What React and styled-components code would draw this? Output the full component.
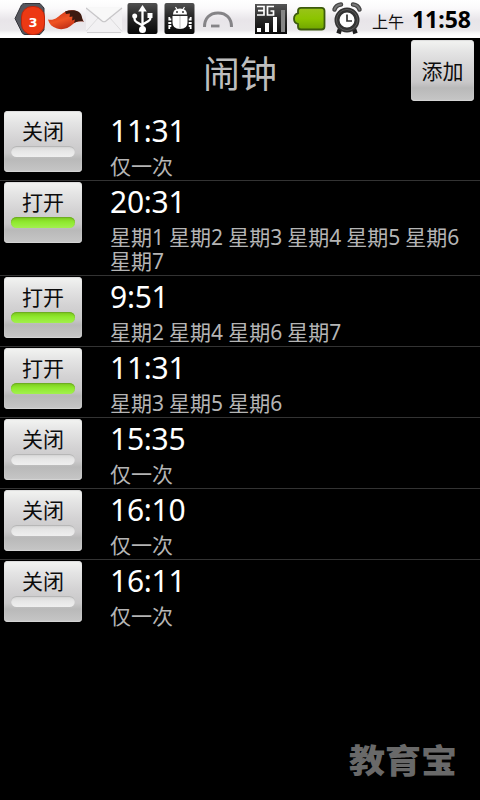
import React from "react";
import styled, { createGlobalStyle } from "styled-components";

const GlobalStyle = createGlobalStyle`
  * { box-sizing: border-box; }
  html, body { margin: 0; background: #000; }
  body { font-family: "Noto Sans", "Noto Sans CJK SC", sans-serif; }
`;

const Screen = styled.div`
  position: relative;
  width: 480px;
  height: 800px;
  overflow: hidden;
  background: #000;
`;

const StatusBar = styled.div`
  height: 38px;
  display: flex;
  padding: 0 9px 0 14px;
  background: linear-gradient(#fff 0, #fbfafb 8px, #e8e5e9 20px, #eae8eb 30px, #f8f8f8 33px, #fff 36px);
`;

const IconGroup = styled.div`
  display: flex;
  height: 38px;
  svg { display: block; flex: none; }
`;

const SystemIcons = styled(IconGroup)`
  margin-left: 18px;
`;

const Clock = styled.div`
  display: flex;
  flex: none;
  align-items: baseline;
  gap: 8px;
  margin-left: auto;
  color: #111;
  line-height: 38px;
`;

const Meridiem = styled.span`
  font-size: 16px;
`;

const ClockTime = styled.span`
  font-size: 23px;
  font-weight: 700;
  color: #000;
`;

const Header = styled.header`
  height: 72px;
  display: grid;
  grid-template-columns: 69px 1fr 69px;
  padding-top: 2px;
`;

const Title = styled.h1`
  grid-column: 2;
  margin: 0;
  text-align: center;
  font-size: 37px;
  font-weight: 400;
  line-height: 67px;
  color: #bebebe;
`;

const ButtonFace = styled.button`
  display: flex;
  flex-direction: column;
  align-items: center;
  height: 61px;
  padding: 0;
  border: 0;
  border-radius: 4px;
  background: linear-gradient(#f3f4f2 0, #e4e4e4 12px, #d4d3d4 28px, #c9c8c9 42px, #b9b9b9 48px, #c6c6c6 61px);
  box-shadow: inset 0 -1px 1px #d4d4d4, inset 0 1px 1px #dcdcdc;
  font-family: inherit;
  font-size: 21px;
  color: #0c0c0c;
`;

const AddButton = styled(ButtonFace)`
  width: 63px;
  line-height: 63px;
`;

const ToggleButton = styled(ButtonFace)`
  flex: none;
  width: 78px;
  line-height: 24px;
  padding-top: 8px;
`;

const Indicator = styled.span`
  width: 64px;
  height: 11px;
  margin-top: 3px;
  border-radius: 6px;
  background: ${(p) => (p.$on ? "linear-gradient(#7cc71d, #8fe92e 45%, #a2f04e)" : "linear-gradient(#d6d6d6, #e6e6e6 45%, #efefef)")};
  box-shadow: inset 0 1px 1px ${(p) => (p.$on ? "#6cab22" : "#b4b4b4")};
`;

const AlarmList = styled.ul`
  margin: 0;
  padding: 0;
  list-style: none;
`;

const AlarmRow = styled.li`
  display: flex;
  gap: 28px;
  min-height: 71px;
  padding: 1px 0 0 4px;
  border-bottom: 1px solid #333;
  &:last-child { border-bottom-color: transparent; }
`;

const AlarmInfo = styled.div`
  flex: 1;
  padding-bottom: 2px;
`;

const AlarmTime = styled.div`
  height: 43px;
  font-size: 30px;
  line-height: 40px;
  letter-spacing: -0.25px;
  color: #fff;
`;

const AlarmDays = styled.div`
  width: 356px;
  font-size: 21px;
  line-height: 24px;
  word-spacing: -0.4px;
  color: #b5b5b5;
`;

const Watermark = styled.div`
  position: absolute;
  left: 349px;
  top: 741px;
  font-size: 36px;
  font-weight: 900;
  line-height: 40px;
  transform: scaleY(0.93);
  color: #696969;
`;

const Badge = () => (
  <svg width="32" height="38" viewBox="14 0 32 38">
    <path d="M15 18.500 21.500 5q1-1.500 3-1.500H40l4 4.500v22l-4 4.500H25q-2 0-3-2z" fill="#55565d" stroke="#34343a" />
    <rect x="21.500" y="6.500" width="23" height="28" rx="10.500" fill="#ed3914" stroke="#bf250c" />
    <text x="33" y="27" textAnchor="middle" fontFamily="DejaVu Sans" fontWeight="700" fontSize="13" fill="#fff">3</text>
  </svg>
);

const Tail = () => (
  <svg width="40" height="38" viewBox="46 0 40 38">
    <defs>
      <linearGradient id="fur" x1="0" x2=".6" y1="0" y2="1">
        <stop offset="0" stopColor="#c02a12" /><stop offset=".55" stopColor="#f05424" /><stop offset="1" stopColor="#b92a14" />
      </linearGradient>
    </defs>
    <path d="M48 19.500C54 21 58 17 61 14.500C66 10 72 9 77 11.500C82 14 81 19 84 21.500C79 21 76 21.500 73 24C68 29 62 30 57 28.500C52 27 49 24 48 19.500Z" fill="url(#fur)" />
    <path d="M65 11.500C72 9 80 10 81.500 15.500C82.500 19 82.500 20.500 84 21.500C79.500 21 77 21.300 74 23L75 19.500L72 20.500L72.500 16.500L69.500 17L70 13.500L66 14Z" fill="#3c1a10" />
  </svg>
);

const Mail = () => (
  <svg width="40" height="38" viewBox="86 0 40 38">
    <path d="M86 7.500h36v24q0 1-1 1H87q-1 0-1-1z" fill="#f2f1f3" />
    <path d="M87 7.500h34l-17 14z" fill="#f8f8f8" />
    <path d="m86 31.500 12.500-14M122 31.500l-12.500-14" fill="none" stroke="#dcdbdd" />
    <path d="m86 8 16 13q2 1.500 4 0L122 8" fill="none" stroke="#c7c6c8" strokeWidth="1.200" />
    <path d="M87 32.500h34" stroke="#cfced0" />
  </svg>
);

const DarkTile = ({ x }) => (
  <>
    <defs>
      <linearGradient id={"tile" + x} x2="0" y2="1">
        <stop stopColor="#515151" /><stop offset=".4" stopColor="#292929" /><stop offset="1" stopColor="#070707" />
      </linearGradient>
    </defs>
    <rect x={x} y="3" width="30" height="31" rx="2" fill={`url(#tile${x})`} />
  </>
);

const Usb = () => (
  <svg width="37" height="38" viewBox="126 0 37 38">
    <DarkTile x={127.5} />
    <path d="M142.500 29V9M142.500 25.500l-6-3.500q-2-1-2-3.500V17M142.500 24.500l6-3.500q2-1 2-3.500V16" fill="none" stroke="#fff" strokeWidth="2.300" />
    <path d="m142.500 5 4.300 6.500h-8.600z" fill="#fff" />
    <circle cx="142.500" cy="29.500" r="3.500" fill="#fff" />
    <circle cx="134.700" cy="16" r="2.500" fill="#fff" />
    <path d="M147.500 13h5v5h-5z" fill="#fff" />
  </svg>
);

const Debug = () => (
  <svg width="38" height="38" viewBox="163 0 38 38">
    <DarkTile x={164.5} />
    <path d="M173 14.500q0-6 7-6t7 6zM172.500 16h15v6.500q0 6.500-7.500 6.500t-7.500-6.500z" fill="#fff" />
    <path d="m175.500 7 1.500 2.500m7.500-2.500-1.500 2.500" stroke="#fff" strokeWidth="1.200" />
    <path d="M171.300 19.500h-2v-2.500m2 6h-3m3 3h-2v3M188.700 19.500h2v-2.500m-2 6h3m-3 3h2v3" fill="none" stroke="#fff" strokeWidth="1.800" />
    <circle cx="177" cy="12" r=".9" fill="#222" /><circle cx="183" cy="12" r=".9" fill="#222" />
    <path d="M180 16v13" stroke="#aaa" strokeWidth=".8" />
  </svg>
);

const Gauge = () => (
  <svg width="35" height="38" viewBox="201 0 35 38">
    <path d="M204.500 27c0-8.500 5-14 13.500-14S231.500 18.500 231.500 27" fill="none" stroke="#858487" strokeWidth="3" />
    <path d="M211 26h8.500" stroke="#858487" strokeWidth="2.800" />
  </svg>
);

const Signal = () => (
  <svg width="35" height="38" viewBox="254 0 35 38">
    <defs>
      <linearGradient id="signal" x2="0" y2="1"><stop stopColor="#555" /><stop offset=".5" stopColor="#292929" /><stop offset="1" stopColor="#090909" /></linearGradient>
    </defs>
    <path d="M255 4h32v30h-32z" fill="url(#signal)" />
    <path d="M257 6.500h7v8.500h-7m1-4.300h6M274 6.500h-6.500v8.500h6V11h-3" fill="none" stroke="#fff" strokeWidth="1.700" />
    <path d="M257 28h4v4h-4zM265 23h4v9h-4zM273 17h4v15h-4z" fill="#fff" />
    <path d="M281 10h4v22h-4z" fill="#858585" />
  </svg>
);

const Battery = () => (
  <svg width="40" height="38" viewBox="289 0 40 38">
    <defs>
      <linearGradient id="battery" x2="0" y2="1"><stop stopColor="#9ac31b" /><stop offset=".5" stopColor="#8cc400" /><stop offset="1" stopColor="#70a500" /></linearGradient>
    </defs>
    <path d="M301 7.800h20.500q3 0 3 3V26.500q0 3-3 3H301q-3 0-3-3V24q-4-1-4-5.300t4-5.300v-2.600q0-3 3-3z" fill="url(#battery)" stroke="#3c5a0c" strokeWidth="1.800" />
  </svg>
);

const AlarmClock = () => (
  <svg width="34" height="38" viewBox="329 0 34 38">
    <path d="m340 29-1.500 4.500M354 29l1.500 4.500" stroke="#202020" strokeWidth="4.500" />
    <circle cx="347" cy="20" r="10" fill="#fff" stroke="#333" strokeWidth="5" />
    <circle cx="347" cy="20" r="10.500" fill="none" stroke="#5a5a5a" strokeWidth="1" />
    <path d="M334.500 9.500Q336 5 341 4.500M359.500 9.500Q358 5 353 4.500" fill="none" stroke="#444" strokeWidth="4.500" strokeLinecap="round" />
    <path d="M334.500 9.500Q336 5 341 4.500M359.500 9.500Q358 5 353 4.500" fill="none" stroke="#777" strokeWidth="2" strokeLinecap="round" />
    <path d="M347 14.500V21h5" fill="none" stroke="#333" strokeWidth="1.700" />
  </svg>
);

const alarms = [
  { time: "11:31", days: "仅一次", on: false },
  { time: "20:31", days: "星期1 星期2 星期3 星期4 星期5 星期6 星期7", on: true },
  { time: "9:51", days: "星期2 星期4 星期6 星期7", on: true },
  { time: "11:31", days: "星期3 星期5 星期6", on: true },
  { time: "15:35", days: "仅一次", on: false },
  { time: "16:10", days: "仅一次", on: false },
  { time: "16:11", days: "仅一次", on: false },
];

export default function App() {
  return (
    <Screen>
      <GlobalStyle />
      <StatusBar>
        <IconGroup><Badge /><Tail /><Mail /><Usb /><Debug /><Gauge /></IconGroup>
        <SystemIcons><Signal /><Battery /><AlarmClock /></SystemIcons>
        <Clock><Meridiem>上午</Meridiem><ClockTime>11:58</ClockTime></Clock>
      </StatusBar>
      <Header>
        <Title>闹钟</Title>
        <AddButton>添加</AddButton>
      </Header>
      <AlarmList>
        {alarms.map((a, i) => (
          <AlarmRow key={i}>
            <ToggleButton>
              {a.on ? "打开" : "关闭"}
              <Indicator $on={a.on} />
            </ToggleButton>
            <AlarmInfo>
              <AlarmTime>{a.time}</AlarmTime>
              <AlarmDays>{a.days}</AlarmDays>
            </AlarmInfo>
          </AlarmRow>
        ))}
      </AlarmList>
      <Watermark>教育宝</Watermark>
    </Screen>
  );
}
